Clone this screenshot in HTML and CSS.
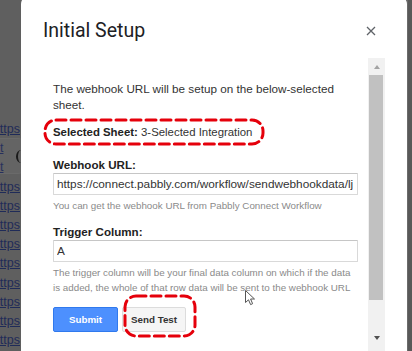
FILE: index.html
```html
<!DOCTYPE html>
<html lang="en">
<head>
    <meta charset="UTF-8">
    <meta name="viewport" content="width=device-width, initial-scale=1.0">
    <title>Initial Setup</title>
    <link rel="stylesheet" href="styles.css">
</head>
<body>
    <div class="page">
        <div class="backdrop-left">
            <div class="link-row"><a href="#">ttps</a></div>
            <div class="link-row row-start"><a href="#">t</a></div>
            <div class="link-row row-start"><a href="#">t</a></div>
            <div class="link-row"><a href="#">ttps</a></div>
            <div class="link-row"><a href="#">ttps</a></div>
            <div class="link-row"><a href="#">ttps</a></div>
            <div class="link-row"><a href="#">ttps</a></div>
            <div class="link-row"><a href="#">ttps</a></div>
            <div class="link-row"><a href="#">ttps</a></div>
            <div class="link-row"><a href="#">ttps</a></div>
            <div class="link-row"><a href="#">ttps</a></div>
            <div class="link-row"><a href="#">ttps</a></div>
            <div class="chip"></div>
        </div>

        <div class="dialog">
            <div class="dialog-head">
                <h2 class="dialog-title">Initial Setup</h2>
                <button class="close-btn" aria-label="Close">
                    <svg width="10" height="10" viewBox="0 0 10 10">
                        <path d="M1 1 L9 9 M9 1 L1 9" stroke="#5f6368" stroke-width="1.3" fill="none"/>
                    </svg>
                </button>
            </div>

            <div class="dialog-body">
                <div class="content">
                    <p class="intro">The webhook URL will be setup on the below-selected sheet.</p>
                    <p class="selected"><b>Selected Sheet:</b> 3-Selected Integration</p>

                    <div class="field field-first">
                        <label for="webhookUrl">Webhook URL:</label>
                        <input type="text" id="webhookUrl" value="https://connect.pabbly.com/workflow/sendwebhookdata/lj">
                        <div class="hint">You can get the webhook URL from Pabbly Connect Workflow</div>
                    </div>

                    <div class="field">
                        <label for="triggerColumn">Trigger Column:</label>
                        <input type="text" id="triggerColumn" value="A">
                        <div class="hint">The trigger column will be your final data column on which if the data<br>is added, the whole of that row data will be sent to the webhook URL</div>
                    </div>

                    <div class="actions">
                        <button class="btn btn-submit">Submit</button>
                        <button class="btn btn-test">Send Test</button>
                    </div>
                </div>

                <div class="scrollbar">
                    <div class="sb-btn"><span class="arrow-up"></span></div>
                    <div class="sb-thumb"></div>
                    <div class="sb-track"></div>
                    <div class="sb-btn"><span class="arrow-down"></span></div>
                </div>
            </div>
        </div>

        <div class="backdrop-right"></div>

        <!-- red dashed annotations -->
        <svg class="mark mark-sheet" width="222" height="28" viewBox="0 0 222 28">
            <rect x="2" y="2" width="218" height="24" rx="11" fill="none" stroke="#e5000b" stroke-width="3" stroke-dasharray="10 5" stroke-linecap="round"/>
        </svg>
        <svg class="mark mark-test" width="74" height="44" viewBox="0 0 74 44">
            <rect x="2" y="2" width="70" height="40" rx="11" fill="none" stroke="#e5000b" stroke-width="3" stroke-dasharray="10 5" stroke-linecap="round"/>
        </svg>

        <svg class="cursor" width="12" height="17" viewBox="0 0 12 17">
            <path d="M0.5 0.5 L0.5 12.5 L3.5 9.8 L5.6 14.6 L7.6 13.7 L5.6 9 L9.5 9 Z" fill="#fff" stroke="#555" stroke-width="1"/>
        </svg>
    </div>
</body>
</html>
```

FILE: styles.css
```css
body {
    margin: 0;
    font-family: 'Liberation Sans', Arial, sans-serif;
    background: #5e5e5e;
    overflow: hidden;
}

.page {
    position: relative;
    display: flex;
    width: 412px;
    height: 351px;
    overflow: hidden;
}

/* dimmed page behind the dialog */
.backdrop-left {
    position: relative;
    width: 21px;
    flex-shrink: 0;
    padding-top: 120px;
    overflow: hidden;
    background: #5f5f5f;
}

.link-row {
    display: flex;
    justify-content: flex-end;
    height: 19.2px;
    line-height: 19.2px;
    padding-right: 1px;
    white-space: nowrap;
}

.link-row.row-start {
    justify-content: flex-start;
}

.link-row a {
    font-size: 12.5px;
    color: #1f2b58;
    text-decoration: underline;
}

.chip {
    position: absolute;
    left: -12px;
    top: 138px;
    width: 40px;
    height: 36px;
    border-radius: 10px;
    border: 1px solid #6a6a6a;
    background: rgba(255, 255, 255, 0.03);
    box-sizing: border-box;
}

.chip::after {
    content: "";
    position: absolute;
    left: 27px;
    top: 11px;
    width: 8px;
    height: 13px;
    border-left: 2px solid #1a1a1a;
    border-radius: 50%;
}

.backdrop-right {
    width: 5px;
    flex-shrink: 0;
    background: #595959;
    border-left: 1px solid #6b6b6b;
    box-sizing: border-box;
}

/* dialog */
.dialog {
    width: 386px;
    flex-shrink: 0;
    margin-top: -4px;
    height: 400px;
    background: #fff;
    border-radius: 8px 8px 0 0;
}

.dialog-head {
    display: flex;
    align-items: center;
    justify-content: space-between;
    height: 62px;
    padding: 23px 28px 15px 22px;
    box-sizing: border-box;
}

.dialog-title {
    margin: 0;
    font-family: Roboto, 'Noto Sans', sans-serif;
    font-weight: 400;
    font-size: 19.5px;
    line-height: 24px;
    color: #202124;
}

.close-btn {
    display: flex;
    align-items: center;
    justify-content: center;
    width: 16px;
    height: 16px;
    padding: 0;
    border: none;
    background: none;
}

.dialog-body {
    display: flex;
    gap: 10px;
    padding: 0 22px 0 32px;
}

.content {
    width: 305px;
    padding-top: 23px;
    color: #333;
    font-size: 11.7px;
}

.intro {
    margin: 0;
    line-height: 16px;
}

.selected {
    margin: 11px 0 0;
    line-height: 16px;
    font-size: 11.4px;
    color: #333;
}

.selected b {
    color: #222;
}

.field {
    margin-top: 11px;
}

.field-first {
    margin-top: 17px;
}

label {
    display: block;
    height: 16px;
    line-height: 16px;
    font-weight: 700;
    font-size: 11.6px;
    color: #222;
}

input[type="text"] {
    display: block;
    width: 100%;
    height: 22px;
    margin: 0;
    padding: 0 3px;
    box-sizing: border-box;
    border: 1px solid #d9d9d9;
    border-top-color: #c6c6c6;
    border-radius: 1px;
    font-family: 'Liberation Sans', Arial, sans-serif;
    font-size: 11.8px;
    color: #333;
    background: #fff;
}

.hint {
    margin-top: 3px;
    line-height: 15px;
    font-size: 9.8px;
    color: #8a8a8a;
    white-space: nowrap;
}

.actions {
    display: flex;
    gap: 4px;
    margin-top: 12px;
}

.btn {
    height: 25px;
    padding: 0;
    border-radius: 2px;
    font-family: 'Liberation Sans', Arial, sans-serif;
    font-size: 9.8px;
    font-weight: 700;
    white-space: nowrap;
    cursor: pointer;
}

.btn-submit {
    width: 65px;
    background: #4d90fe;
    border: 1px solid #3079ed;
    color: #fff;
}

.btn-test {
    width: 64px;
    background: #f5f5f5;
    border: 1px solid #dcdcdc;
    color: #333;
}

/* fake scrollbar */
.scrollbar {
    display: flex;
    flex-direction: column;
    width: 17px;
    height: 293px;
    padding-bottom: 5px;
    box-sizing: border-box;
    background: #f1f1f1;
}

.sb-btn {
    display: flex;
    align-items: center;
    justify-content: center;
    height: 17px;
    flex-shrink: 0;
}

.arrow-up {
    border-left: 3.5px solid transparent;
    border-right: 3.5px solid transparent;
    border-bottom: 4px solid #a3a3a3;
}

.arrow-down {
    border-left: 3.5px solid transparent;
    border-right: 3.5px solid transparent;
    border-top: 4px solid #505050;
}

.sb-thumb {
    height: 225px;
    margin: 0 2px 0 1px;
    background: #c1c1c1;
    flex-shrink: 0;
}

.sb-track {
    flex: 1;
}

/* overlays */
.mark {
    position: absolute;
}

.mark-sheet {
    left: 43px;
    top: 118px;
}

.mark-test {
    left: 123px;
    top: 294px;
}

.cursor {
    position: absolute;
    left: 245px;
    top: 290px;
}
```
